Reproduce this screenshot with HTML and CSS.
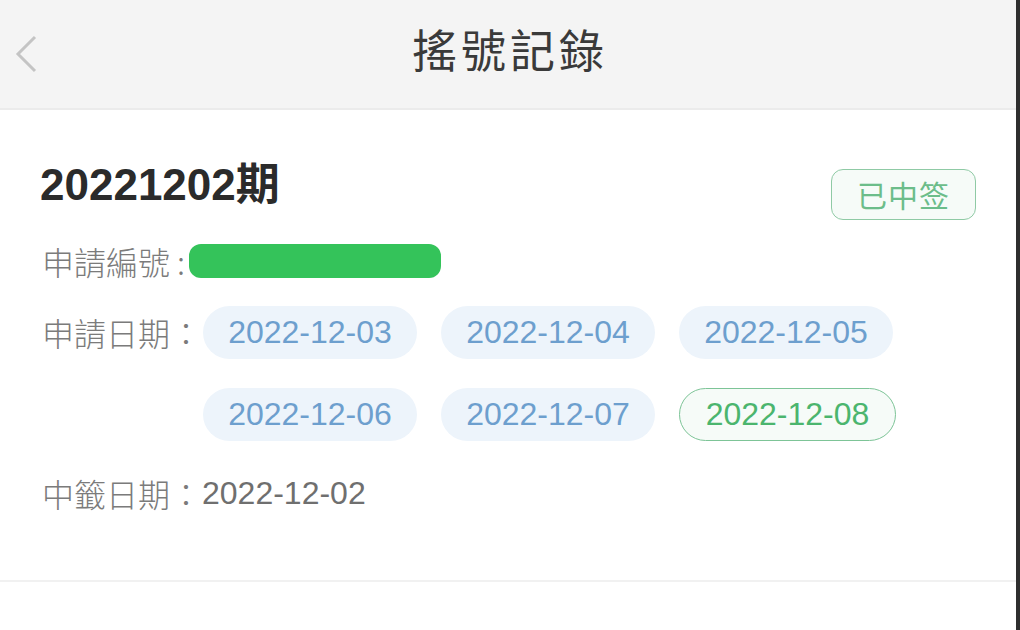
FILE: index.html
```html
<!DOCTYPE html>
<html>
<head lang="zh-Hant">
    <meta charset="UTF-8">
    <title>搖號記錄</title>
    <link rel="stylesheet" href="styles.css">
</head>
<body>
<div id="app">
    <div id="header">
        <span class="back">
            <svg width="24" height="40" viewBox="0 0 24 40">
                <polyline points="21,3 4,20 21,37" fill="none" stroke="#c4c4c4" stroke-width="3"/>
            </svg>
        </span>
        <h1>搖號記錄</h1>
    </div>
    <div class="record">
        <div class="record-top">
            <h2>20221202期</h2>
            <span class="status">已中签</span>
        </div>
        <div class="row code">
            <span class="label">申請編號 :</span>
            <span class="masked"></span>
        </div>
        <div class="row dates">
            <span class="label">申請日期：</span>
            <ul class="chips">
                <li>2022-12-03</li>
                <li>2022-12-04</li>
                <li>2022-12-05</li>
                <li>2022-12-06</li>
                <li>2022-12-07</li>
                <li class="won">2022-12-08</li>
            </ul>
        </div>
        <div class="row drawn">
            <span class="label">中籤日期：</span>
            <span class="value">2022-12-02</span>
        </div>
    </div>
    <div class="record next"></div>
</div>
<div id="edge"></div>
</body>
</html>
```

FILE: styles.css
```css
* {
    margin: 0;
    padding: 0;
    box-sizing: border-box;
}

ul, ol {
    list-style: none;
}

body {
    display: flex;
    height: 630px;
    overflow: hidden;
    background: #2e2e2e;
    font-family: "Liberation Sans", "Noto Sans CJK TC", sans-serif;
}

#app {
    flex: 1;
    background: #fcfcfc;
}

#edge {
    width: 4px;
    background: #2e2e2e;
}

#header {
    height: 110px;
    background: #f4f4f4;
    border-bottom: 2px solid #ebebeb;
    display: flex;
    align-items: center;
    justify-content: center;
    position: relative;
}

#header .back {
    position: absolute;
    left: 14px;
    top: 34px;
}

#header h1 {
    font-family: "Noto Sans CJK TC", sans-serif;
    font-weight: 400;
    font-size: 45px;
    letter-spacing: 4px;
    color: #3a3a3a;
    margin-top: -12px;
    margin-left: 4px;
}

.record {
    background: #fff;
    padding: 48px 40px 67px 40px;
    border-bottom: 2px solid #f1f1f1;
}

.record-top {
    display: flex;
    justify-content: space-between;
    align-items: flex-start;
    height: 50px;
}

.record-top h2 {
    font-size: 44px;
    line-height: 50px;
    font-weight: 700;
    color: #2b2b2b;
    margin-top: 2px;
}

.status {
    margin-top: 11px;
    width: 145px;
    height: 51px;
    border: 1.5px solid #8fcaa5;
    border-radius: 12px;
    background: #f6fbf8;
    color: #6cbd8a;
    font-family: "Noto Sans CJK SC", sans-serif;
    font-size: 30px;
    line-height: 48px;
    text-align: center;
    letter-spacing: 1px;
}

.row {
    display: flex;
    align-items: center;
    height: 40px;
    color: #7a7a7a;
}

.label {
    padding-left: 2px;
    font-family: "Noto Sans CJK TC", sans-serif;
    font-weight: 300;
    font-size: 32px;
    color: #7b7b7b;
    white-space: pre;
}

.code {
    margin-top: 33px;
}

.masked {
    width: 252px;
    height: 34px;
    margin-left: 4px;
    border-radius: 12px;
    background: #34c35a;
}

.dates {
    height: auto;
    align-items: flex-start;
    margin-top: 25px;
}

.dates .label {
    line-height: 53px;
    width: 163px;
}

.chips {
    display: grid;
    grid-template-columns: repeat(3, 214px);
    column-gap: 24px;
    row-gap: 29px;
}

.chips li {
    height: 53px;
    line-height: 53px;
    border-radius: 27px;
    background: #edf4fb;
    color: #6d9fce;
    font-size: 32px;
    text-align: center;
}

.chips li.won {
    width: 217px;
    background: #f6fbf8;
    border: 1px solid #7dc497;
    line-height: 51px;
    color: #4bb56e;
}

.drawn {
    margin-top: 32px;
}

.value {
    color: #6f6f6f;
    font-size: 32px;
}

.next {
    height: 60px;
    border-bottom: 0;
}
```
